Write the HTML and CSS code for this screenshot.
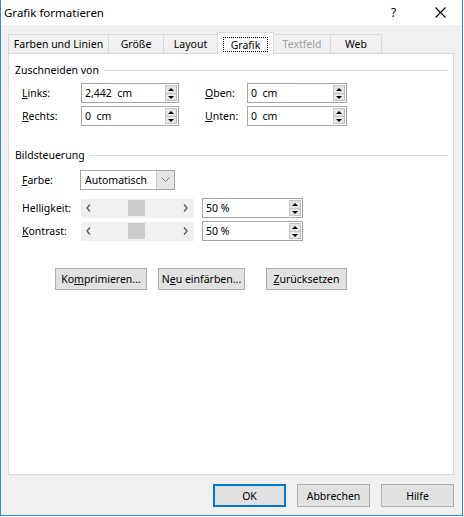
FILE: index.html
```html
<!DOCTYPE html>
<html lang="de">
<head>
<meta charset="utf-8">
<title>Grafik formatieren</title>
<link rel="stylesheet" href="styles.css">
</head>
<body>
<div class="window">
  <div class="titlebar">
    <span class="title">Grafik formatieren</span>
    <span class="help">?</span>
    <span class="close"><svg width="11" height="11" viewBox="0 0 11 11"><path d="M0.5 0.5 L10.5 10.5 M10.5 0.5 L0.5 10.5" stroke="#000" stroke-width="1.1" fill="none"/></svg></span>
  </div>
  <div class="body">
    <div class="tabs">
      <div class="tab w1">Farben und Linien</div>
      <div class="tab w2">Größe</div>
      <div class="tab w3">Layout</div>
      <div class="tab active w4"><span class="focus">Grafik</span></div>
      <div class="tab disabled w5">Textfeld</div>
      <div class="tab w6">Web</div>
    </div>
    <div class="panel">
      <div class="group-head"><span>Zuschneiden von</span><span class="rule"></span></div>
      <div class="crop-grid">
        <label class="lbl c1"><u>L</u>inks:</label>
        <div class="spin w98"><span class="val">2,442&nbsp; cm</span><span class="arrows"><span class="up"></span><span class="down"></span></span></div>
        <label class="lbl c2"><u>O</u>ben:</label>
        <div class="spin w100"><span class="val">0&nbsp; cm</span><span class="arrows"><span class="up"></span><span class="down"></span></span></div>
        <label class="lbl c1"><u>R</u>echts:</label>
        <div class="spin w98"><span class="val">0&nbsp; cm</span><span class="arrows"><span class="up"></span><span class="down"></span></span></div>
        <label class="lbl c2"><u>U</u>nten:</label>
        <div class="spin w100"><span class="val">0&nbsp; cm</span><span class="arrows"><span class="up"></span><span class="down"></span></span></div>
      </div>
      <div class="group-head second"><span>Bildsteuerung</span><span class="rule"></span></div>
      <div class="ctrl-row farbe">
        <label class="lbl c1"><u>F</u>arbe:</label>
        <div class="select"><span class="val">Automatisch</span><span class="drop"><svg width="9" height="6" viewBox="0 0 9 6"><path d="M0.5 0.5 L4.5 4.5 L8.5 0.5" stroke="#707070" stroke-width="1" fill="none"/></svg></span></div>
      </div>
      <div class="ctrl-row">
        <label class="lbl c1">Helli<u>g</u>keit:</label>
        <div class="scroll"><svg class="la" width="5" height="8" viewBox="0 0 5 8"><path d="M4 0.5 L1 4 L4 7.5" stroke="#606060" stroke-width="1.4" fill="none"/></svg><span class="thumb"></span><svg class="ra" width="5" height="8" viewBox="0 0 5 8"><path d="M1 0.5 L4 4 L1 7.5" stroke="#606060" stroke-width="1.4" fill="none"/></svg></div>
        <div class="spin w101"><span class="val">50 %</span><span class="arrows"><span class="up"></span><span class="down"></span></span></div>
      </div>
      <div class="ctrl-row tight">
        <label class="lbl c1"><u>K</u>ontrast:</label>
        <div class="scroll"><svg class="la" width="5" height="8" viewBox="0 0 5 8"><path d="M4 0.5 L1 4 L4 7.5" stroke="#606060" stroke-width="1.4" fill="none"/></svg><span class="thumb"></span><svg class="ra" width="5" height="8" viewBox="0 0 5 8"><path d="M1 0.5 L4 4 L1 7.5" stroke="#606060" stroke-width="1.4" fill="none"/></svg></div>
        <div class="spin w101"><span class="val">50 %</span><span class="arrows"><span class="up"></span><span class="down"></span></span></div>
      </div>
      <div class="action-row">
        <button class="btn b1">Ko<u>m</u>primieren...</button>
        <button class="btn b2">N<u>e</u>u einfärben...</button>
        <button class="btn b3"><u>Z</u>urücksetzen</button>
      </div>
    </div>
    <div class="footer">
      <button class="btn dlg default">OK</button>
      <button class="btn dlg">Abbrechen</button>
      <button class="btn dlg">Hilfe</button>
    </div>
  </div>
</div>
</body>
</html>
```

FILE: styles.css
```css
html, body {
  margin: 0;
  padding: 0;
  background: #ffffff;
}
body {
  font-family: "Noto Sans", "DejaVu Sans", sans-serif;
  font-size: 10.5px;
  color: #000;
}
.window {
  width: 463px;
  height: 516px;
  border-left: 1px solid #3f86c9;
  border-right: 1px solid #3f86c9;
  border-bottom: 1px solid #3f86c9;
  box-sizing: border-box;
  display: flex;
  flex-direction: column;
  background: #f0f0f0;
}
.titlebar {
  height: 25px;
  background: #ffffff;
  display: flex;
  align-items: center;
  position: relative;
}
.title {
  font-size: 11.5px;
  margin-left: 3px;
  flex: 1;
  margin-top: -1px;
}
.help {
  font-size: 12px;
  width: 10px;
  margin-right: 34px;
  margin-top: -1px;
}
.close {
  display: flex;
  margin-right: 16px;
  margin-top: -1px;
}
.body {
  flex: 1;
  padding: 7px 0 0 7px;
  display: flex;
  flex-direction: column;
}
.tabs {
  display: flex;
  align-items: flex-end;
  height: 21px;
  position: relative;
  z-index: 2;
}
.tab {
  height: 19px;
  box-sizing: border-box;
  border: 1px solid #d9d9d9;
  border-bottom: none;
  margin-right: -1px;
  display: flex;
  align-items: center;
  justify-content: center;
  background: #f0f0f0;
  white-space: nowrap;
}
.tab.active {
  height: 22px;
  background: #ffffff;
  margin-bottom: -1px;
  position: relative;
  z-index: 3;
}
.tab.disabled { color: #a0a0a0; }
.w1 { width: 101px; }
.w2 { width: 56px; }
.w3 { width: 55px; }
.w4 { width: 57px; }
.w5 { width: 58px; }
.w6 { width: 52px; }
.focus {
  border: 1px dotted #000;
  width: 45px;
  height: 15px;
  display: flex;
  align-items: center;
  justify-content: center;
  box-sizing: border-box;
  margin-top: 2px;
}
.panel {
  width: 446px;
  height: 422px;
  box-sizing: border-box;
  background: #ffffff;
  border: 1px solid #d9d9d9;
  padding: 9px 5px 0 6px;
}
.group-head {
  display: flex;
  align-items: center;
  height: 14px;
  line-height: 14px;
}
.group-head .rule {
  flex: 1;
  height: 1px;
  background: #dcdcdc;
  margin-left: 5px;
}
.group-head.second { margin-top: 22px; }
.crop-grid {
  display: grid;
  grid-template-columns: 59px 98px 26px 42px 100px;
  grid-auto-rows: 20px;
  row-gap: 3px;
  margin-top: 6px;
  padding-left: 7px;
  align-items: center;
}
.crop-grid .c2 { grid-column: 4; }
.lbl { white-space: nowrap; }
.spin {
  height: 20px;
  box-sizing: border-box;
  border: 1px solid #a5a5a5;
  background: #fff;
  display: flex;
  align-items: center;
  justify-content: space-between;
  padding-left: 3px;
}
.w98 { width: 98px; }
.w100 { width: 100px; }
.w101 { width: 101px; }
.arrows {
  display: flex;
  flex-direction: column;
  width: 12px;
  height: 16px;
  margin-right: 1px;
  border: 1px solid #c4c4c4;
  box-sizing: border-box;
}
.arrows .up, .arrows .down {
  flex: 1;
  background: #e6e6e6;
  position: relative;
}
.arrows .up { border-bottom: 1px solid #c4c4c4; }
.arrows .up::after, .arrows .down::after {
  content: "";
  position: absolute;
  left: 2px;
  width: 0;
  height: 0;
  border-left: 3px solid transparent;
  border-right: 3px solid transparent;
}
.arrows .up::after { top: 2px; border-bottom: 3px solid #000; }
.arrows .down::after { top: 2px; border-top: 3px solid #000; }
.ctrl-row {
  display: flex;
  align-items: center;
  height: 20px;
  margin-top: 8px;
  padding-left: 7px;
}
.ctrl-row.tight { margin-top: 3px; }
.ctrl-row.farbe { margin-top: 8px; }
.ctrl-row .c1 { width: 59px; }
.select {
  width: 95px;
  height: 20px;
  box-sizing: border-box;
  border: 1px solid #a5a5a5;
  display: flex;
  align-items: center;
  margin-left: -1px;
}
.select .val { flex: 1; padding-left: 4px; }
.select .drop {
  width: 17px;
  height: 18px;
  background: #e5e5e5;
  border-left: 1px solid #c9c9c9;
  display: flex;
  align-items: center;
  justify-content: center;
}
.scroll {
  width: 113px;
  height: 19px;
  background: #f0f0f0;
  position: relative;
  margin-right: 8px;
  display: flex;
  align-items: center;
}
.scroll .la { position: absolute; left: 5px; top: 5px; }
.scroll .ra { position: absolute; right: 6px; top: 5px; }
.scroll .thumb {
  position: absolute;
  left: 47px;
  top: 1px;
  width: 17px;
  height: 16px;
  background: #cdcdcd;
}
.action-row {
  display: flex;
  margin-top: 27px;
  padding-left: 40px;
}
.btn {
  font-family: inherit;
  font-size: 10.5px;
  color: #000;
  background: #e1e1e1;
  border: 1px solid #adadad;
  height: 22px;
  padding: 0;
  margin: 0;
  box-sizing: border-box;
  white-space: nowrap;
}
.b1 { width: 92px; }
.b2 { width: 87px; margin-left: 11px; }
.b3 { width: 81px; margin-left: 21px; }
.footer {
  display: flex;
  justify-content: flex-end;
  gap: 11px;
  margin-top: 9px;
  width: 446px;
}
.btn.dlg { width: 73px; height: 23px; }
.btn.default {
  border: 1px solid #0078d7;
  box-shadow: inset 0 0 0 1px #0078d7;
}
```
